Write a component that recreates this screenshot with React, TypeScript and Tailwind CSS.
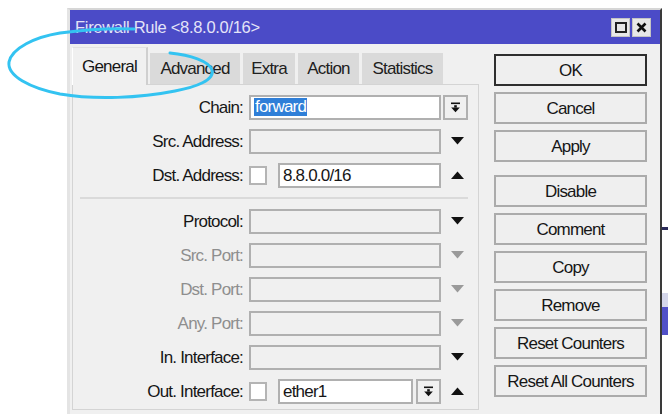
import type { ReactNode } from 'react';

// small glyphs used by the combo / expand controls
function TriDown({ muted }: { muted?: boolean }) {
  return (
    <svg width="13" height="8" viewBox="0 0 13 8" className="mx-auto">
      <polygon points="0,0 13,0 6.5,7.5" fill={muted ? '#9a9a9a' : '#111'} />
    </svg>
  );
}

function TriUp() {
  return (
    <svg width="13" height="8" viewBox="0 0 13 8" className="mx-auto">
      <polygon points="0,8 13,8 6.5,0.5" fill="#111" />
    </svg>
  );
}

function ComboButton() {
  return (
    <div className="flex h-[25px] w-[25px] items-center justify-center border-2 border-[#b0b0b0] bg-[#f0f0f0]">
      <svg width="11" height="11" viewBox="0 0 11 11">
        <rect x="1" y="0.5" width="9" height="1.6" fill="#111" />
        <rect x="4.2" y="3.2" width="2.6" height="2.4" fill="#111" />
        <polygon points="1.2,5.4 9.8,5.4 5.5,10.2" fill="#111" />
      </svg>
    </div>
  );
}

function Field({ value, white, className = '', children }: { value?: string; white?: boolean; className?: string; children?: ReactNode }) {
  return (
    <div
      className={`flex h-[25px] items-center border-2 border-[#b0b0b0] px-[3px] ${white ? 'bg-white' : 'bg-[#f0f0f0]'} ${className}`}
    >
      {children ?? value}
    </div>
  );
}

function Check() {
  return <div className="h-[19px] w-[18px] shrink-0 border-2 border-[#b4b4b4] bg-white" />;
}

interface RowProps {
  label: string;
  disabled?: boolean;
  children: ReactNode;
  slot?: ReactNode;
}

function Row({ label, disabled, children, slot }: RowProps) {
  return (
    <div className="flex h-[34px] items-center">
      <div className={`w-[170px] text-right ${disabled ? 'text-[#8e8e8e]' : 'text-[#161616]'}`}>{label}</div>
      <div className="ml-[6px] flex w-[192px] items-center">{children}</div>
      <div className="ml-[1px] flex h-full w-[30px] items-center">{slot}</div>
    </div>
  );
}

const tabs = [
  { name: 'Advanced', w: 'w-[90px]' },
  { name: 'Extra', w: 'w-[52px]' },
  { name: 'Action', w: 'w-[61px]' },
  { name: 'Statistics', w: 'w-[81px]' },
];

const actions = ['Cancel', 'Apply'];
const actions2 = ['Disable', 'Comment', 'Copy', 'Remove', 'Reset Counters', 'Reset All Counters'];

function WinButton({ label, primary }: { label: string; primary?: boolean }) {
  return (
    <div
      className={`flex h-[32px] items-center justify-center border-2 bg-[#efefef] whitespace-nowrap text-[#161616] ${
        primary ? 'border-[#2e2e2e]' : 'border-[#ababab]'
      }`}
    >
      {label}
    </div>
  );
}

export default function App() {
  return (
    <div className="relative flex h-[414px] w-[668px] overflow-hidden bg-white font-['Liberation_Sans',Arial,sans-serif] text-[17px] leading-none tracking-[-0.8px]">
      <div className="w-[67px] shrink-0" />

      {/* dialog window */}
      <div className="mt-[8px] flex w-[595px] shrink-0 flex-col border-t-2 border-r-2 border-l-[3px] border-t-[#d6d6d6] border-r-[#3a3a3a] border-l-[#e4e4e4] bg-[#f0f0f0]">
        <div className="flex h-[34px] shrink-0 items-center bg-[#4b4bc7] pr-[9px] pl-[5px]">
          <span className="text-[16.5px] tracking-[-0.3px] text-[#e4e4f8]">Firewall Rule &lt;8.8.0.0/16&gt;</span>
          <div className="ml-auto flex gap-[2px]">
            <div className="flex h-[19px] w-[19px] items-center justify-center border border-[#c4c4c4] bg-[#e8e8e8]">
              <div className="h-[11px] w-[12px] border-2 border-[#222]" />
            </div>
            <div className="flex h-[19px] w-[19px] items-center justify-center border border-[#c4c4c4] bg-[#e8e8e8]">
              <svg width="11" height="11" viewBox="0 0 11 11">
                <path d="M1.5 1.5 L9.5 9.5 M9.5 1.5 L1.5 9.5" stroke="#111" strokeWidth="2.6" />
              </svg>
            </div>
          </div>
        </div>

        <div className="flex flex-1 pl-[2px]">
          {/* tabs + general page */}
          <div className="flex w-[407px] shrink-0 flex-col">
            <div className="flex h-[40px] items-end">
              <div className="relative z-10 -mb-px flex h-[38px] w-[76px] items-center justify-center border-t border-r-2 border-l border-t-[#e2e2e2] border-r-[#cfcfcf] border-l-white bg-[#f0f0f0] text-[#161616]">
                General
              </div>
              {tabs.map((t, i) => (
                <div
                  key={t.name}
                  className={`flex h-[31px] items-center justify-center bg-[#dadada] text-[#202020] ${t.w} ${i === 0 ? 'ml-[2px]' : 'ml-[3px]'}`}
                >
                  {t.name}
                </div>
              ))}
            </div>

            <div className="h-[326px] border border-[#d4d4d4] pt-[5px]">
              <Row label="Chain:" slot={<div className="pl-[1px]"><ComboButton /></div>}>
                <Field white className="w-full">
                  <span className="bg-[#2f7fd8] px-[1px] pb-[1px] text-white">forward</span>
                </Field>
              </Row>
              <Row label="Src. Address:" slot={<TriDown />}>
                <Field className="w-full" />
              </Row>
              <Row label="Dst. Address:" slot={<TriUp />}>
                <Check />
                <Field white value="8.8.0.0/16" className="ml-[11px] flex-1 text-[#161616]" />
              </Row>

              <div className="flex h-[12px] items-center pl-[7px]">
                <div className="h-[2px] w-[388px] bg-[#dadada]" />
              </div>

              <Row label="Protocol:" slot={<TriDown />}>
                <Field className="w-full" />
              </Row>
              <Row label="Src. Port:" disabled slot={<TriDown muted />}>
                <Field className="w-full" />
              </Row>
              <Row label="Dst. Port:" disabled slot={<TriDown muted />}>
                <Field className="w-full" />
              </Row>
              <Row label="Any. Port:" disabled slot={<TriDown muted />}>
                <Field className="w-full" />
              </Row>
              <Row label="In. Interface:" slot={<TriDown />}>
                <Field className="w-full" />
              </Row>
              <Row label="Out. Interface:" slot={<TriUp />}>
                <Check />
                <Field white value="ether1" className="ml-[11px] flex-1 text-[#161616]" />
                <div className="ml-[3px]">
                  <ComboButton />
                </div>
              </Row>
            </div>
          </div>

          {/* action buttons */}
          <div className="mt-[10px] ml-[15px] flex w-[153px] shrink-0 flex-col gap-[6px]">
            <WinButton label="OK" primary />
            {actions.map((a) => (
              <WinButton key={a} label={a} />
            ))}
            <div className="h-[1px]" />
            {actions2.map((a) => (
              <WinButton key={a} label={a} />
            ))}
          </div>
        </div>
      </div>

      {/* edge of the window behind */}
      <div className="flex w-[6px] shrink-0 flex-col">
        <div className="h-[227px]" />
        <div className="h-[3px] bg-[#2c2c5a]" />
        <div className="h-[63px]" />
        <div className="h-[14px] bg-[#d4d6ea]" />
        <div className="h-[28px] bg-[#5050c8]" />
      </div>

      {/* hand-drawn marker circle */}
      <svg className="pointer-events-none absolute inset-0" width="668" height="414" viewBox="0 0 668 414">
        <path
          d="M134 29 C110 28 82 30 60 33 C35 37 12 48 9 62 C7 76 30 88 60 94 C95 100 140 98 175 91 C196 87 215 80 212 70 C209 61 190 55 170 53"
          fill="none"
          stroke="#33c3f1"
          strokeWidth="3"
          strokeLinecap="round"
        />
      </svg>
    </div>
  );
}
